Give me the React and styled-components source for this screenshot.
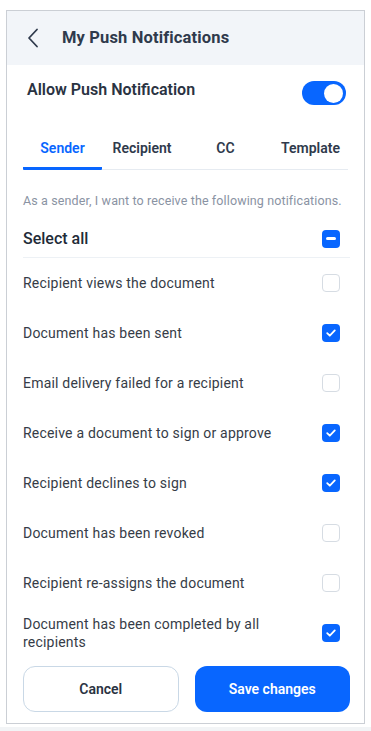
import React, { useState } from "react";
import styled, { createGlobalStyle } from "styled-components";

const GlobalStyle = createGlobalStyle`
  html, body {
    margin: 0;
    padding: 0;
    background: #ffffff;
    font-family: Roboto, "Liberation Sans", sans-serif;
  }
`;

const items = [
  { label: "Recipient views the document", checked: false },
  { label: "Document has been sent", checked: true },
  { label: "Email delivery failed for a recipient", checked: false },
  { label: "Receive a document to sign or approve", checked: true },
  { label: "Recipient declines to sign", checked: true },
  { label: "Document has been revoked", checked: false },
  { label: "Recipient re-assigns the document", checked: false },
  { label: "Document has been completed by all recipients", checked: true },
];

const tabs = ["Sender", "Recipient", "CC", "Template"];

function CheckBox({ state }) {
  return (
    <Box $on={state !== "off"}>
      {state === "on" && (
        <svg width="12" height="12" viewBox="0 0 12 12" fill="none">
          <path
            d="M2.2 6.2 L4.8 8.7 L9.8 3.4"
            stroke="#fff"
            strokeWidth="1.8"
            strokeLinecap="round"
            strokeLinejoin="round"
          />
        </svg>
      )}
      {state === "some" && <Dash />}
    </Box>
  );
}

function App() {
  const [active] = useState(0);
  return (
    <>
      <GlobalStyle />
      <Frame>
        <Header>
          <svg width="12" height="20" viewBox="0 0 12 20" fill="none">
            <path
              d="M10 1.5 L2 10 L10 18.5"
              stroke="#2f3a4c"
              strokeWidth="1.8"
              strokeLinecap="round"
              strokeLinejoin="round"
            />
          </svg>
          <Title>My Push Notifications</Title>
        </Header>

        <AllowRow>
          <AllowLabel>Allow Push Notification</AllowLabel>
          <Toggle>
            <Knob />
          </Toggle>
        </AllowRow>

        <Body>
          <TabBar>
            {tabs.map((t, i) => (
              <Tab key={t} $active={i === active}>
                {t}
              </Tab>
            ))}
          </TabBar>

          <Hint>As a sender, I want to receive the following notifications.</Hint>

          <SelectAll>
            <span>Select all</span>
            <CheckBox state="some" />
          </SelectAll>

          {items.map((it) => (
            <Row key={it.label}>
              <RowLabel>{it.label}</RowLabel>
              <CheckBox state={it.checked ? "on" : "off"} />
            </Row>
          ))}

          <Actions>
            <Button>Cancel</Button>
            <Button $primary>Save changes</Button>
          </Actions>
        </Body>
      </Frame>
      <Strip />
    </>
  );
}

const Frame = styled.div`
  margin: 10px 6px 0;
  height: 714px;
  border: 1px solid #cbcfd5;
  box-sizing: border-box;
  display: flex;
  flex-direction: column;
  overflow: hidden;
`;

const Header = styled.div`
  height: 54px;
  background: #f2f5f9;
  display: flex;
  align-items: center;
  padding-left: 20px;
  gap: 23px;
  flex-shrink: 0;
`;

const Title = styled.div`
  font-size: 16.5px;
  font-weight: 700;
  color: #2f3a4c;
  margin-top: -1px;
  letter-spacing: 0.15px;
`;

const AllowRow = styled.div`
  display: flex;
  align-items: center;
  justify-content: space-between;
  padding: 14px 18px 0 20px;
  height: 26px;
`;

const AllowLabel = styled.div`
  font-size: 16px;
  font-weight: 600;
  color: #2a3342;
  margin-top: -5px;
`;

const Toggle = styled.div`
  width: 44px;
  height: 24px;
  border-radius: 12px;
  background: #0866ff;
  display: flex;
  align-items: center;
  justify-content: flex-end;
  padding-right: 3px;
  box-sizing: border-box;
  margin-top: 2px;
`;

const Knob = styled.div`
  width: 19px;
  height: 19px;
  border-radius: 50%;
  background: #fff;
`;

const Body = styled.div`
  padding: 0 14px 0 16px;
  display: flex;
  flex-direction: column;
`;

const TabBar = styled.div`
  margin-top: 27px;
  display: grid;
  grid-template-columns: 79px 80px 87px 1fr;
  border-bottom: 1px solid #e6ebf1;
  margin-right: 2px;
`;

const Tab = styled.div`
  height: 38px;
  display: flex;
  align-items: center;
  justify-content: center;
  font-size: 14px;
  font-weight: 600;
  color: ${(p) => (p.$active ? "#0866ff" : "#2f3a4c")};
  box-sizing: border-box;
  padding-bottom: 4px;
  border-bottom: 3px solid ${(p) => (p.$active ? "#0866ff" : "transparent")};
  border-radius: 0 0 1px 1px;
  margin-bottom: -1px;
  &:last-child {
    justify-content: flex-end;
    padding-right: 8px;
  }
`;

const Hint = styled.div`
  font-size: 12.5px;
  letter-spacing: 0.12px;
  color: #8a93a3;
  margin-top: 23px;
  white-space: nowrap;
`;

const SelectAll = styled.div`
  display: flex;
  align-items: center;
  justify-content: space-between;
  height: 40px;
  box-sizing: border-box;
  padding: 2px 10px 0 0;
  margin-top: 10px;
  border-bottom: 1px solid #edf1f5;
  font-size: 16px;
  font-weight: 500;
  color: #222b38;
`;

const Row = styled.div`
  display: flex;
  align-items: center;
  justify-content: space-between;
  height: 50px;
  padding-right: 10px;
  gap: 24px;
`;

const RowLabel = styled.div`
  font-size: 14px;
  line-height: 18px;
  color: #363c47;
  letter-spacing: 0.2px;
`;

const Box = styled.div`
  width: 18px;
  height: 18px;
  flex-shrink: 0;
  box-sizing: border-box;
  border-radius: 4px;
  background: ${(p) => (p.$on ? "#0866ff" : "#fff")};
  border: ${(p) => (p.$on ? "none" : "1.5px solid #d6dce3")};
  display: flex;
  align-items: center;
  justify-content: center;
`;

const Dash = styled.div`
  width: 10px;
  height: 2.5px;
  border-radius: 2px;
  background: #fff;
`;

const Actions = styled.div`
  display: grid;
  grid-template-columns: 1fr 1fr;
  gap: 16px;
  margin-top: 8px;
`;

const Button = styled.button`
  height: 46px;
  border-radius: 12px;
  font-family: Roboto, "Liberation Sans", sans-serif;
  font-size: 14px;
  font-weight: 600;
  cursor: pointer;
  background: ${(p) => (p.$primary ? "#0866ff" : "#fff")};
  color: ${(p) => (p.$primary ? "#fff" : "#2a3342")};
  border: ${(p) => (p.$primary ? "none" : "1px solid #c9d8e6")};
`;

const Strip = styled.div`
  margin-top: 3px;
  height: 10px;
  background: #f2f4f6;
`;

export default App;
